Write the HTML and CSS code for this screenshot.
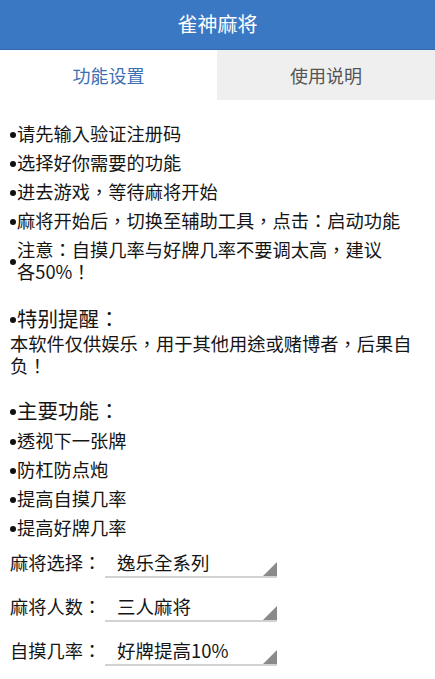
FILE: index.html
```html
<!DOCTYPE html>
<html lang="zh-CN">
<head>
<meta charset="utf-8">
<title>雀神麻将</title>
<link rel="stylesheet" href="styles.css">
</head>
<body>
<header class="appbar">雀神麻将</header>
<nav class="tabs">
  <div class="tab tab-active">功能设置</div>
  <div class="tab tab-idle">使用说明</div>
</nav>
<main class="content">
  <ul class="list list-top">
    <li class="item"><span class="dot"></span><span class="txt">请先输入验证注册码</span></li>
    <li class="item"><span class="dot"></span><span class="txt">选择好你需要的功能</span></li>
    <li class="item"><span class="dot"></span><span class="txt">进去游戏，等待麻将开始</span></li>
    <li class="item"><span class="dot"></span><span class="txt">麻将开始后，切换至辅助工具，点击：启动功能</span></li>
    <li class="item"><span class="dot"></span><span class="txt">注意：自摸几率与好牌几率不要调太高，建议<span class="keep">各50%！</span></span></li>
  </ul>
  <div class="heading heading-warn"><span class="dot"></span><span>特别提醒：</span></div>
  <p class="para">本软件仅供娱乐，用于其他用途或赌博者，后果自负！</p>
  <div class="heading heading-main"><span class="dot"></span><span>主要功能：</span></div>
  <ul class="list list-main">
    <li class="item"><span class="dot"></span><span class="txt">透视下一张牌</span></li>
    <li class="item"><span class="dot"></span><span class="txt">防杠防点炮</span></li>
    <li class="item"><span class="dot"></span><span class="txt">提高自摸几率</span></li>
    <li class="item"><span class="dot"></span><span class="txt">提高好牌几率</span></li>
  </ul>
  <div class="form">
    <div class="row"><span class="label">麻将选择：</span><div class="spinner">逸乐全系列</div></div>
    <div class="row"><span class="label">麻将人数：</span><div class="spinner">三人麻将</div></div>
    <div class="row"><span class="label">自摸几率：</span><div class="spinner">好牌提高10%</div></div>
  </div>
</main>
</body>
</html>
```
FILE: styles.css
```css
* { box-sizing: border-box; }
html, body { margin: 0; padding: 0; background: #ffffff; }
body {
  font-family: "Noto Sans CJK TC", "Noto Sans CJK SC", "Noto Sans", sans-serif;
  font-feature-settings: "locl" 0;
  color: #151515;
  width: 435px;
  height: 679px;
  overflow: hidden;
}
.appbar {
  height: 50px;
  background: #3a78c4;
  color: #ffffff;
  font-size: 20px;
  line-height: 48px;
  text-align: center;
  border-bottom: 1px solid #3569ad;
}
.tabs {
  display: flex;
  height: 50px;
}
.tab {
  font-size: 18px;
  line-height: 50px;
  text-align: center;
}
.tab-active {
  width: 217px;
  background: #ffffff;
  color: #3c6fb3;
}
.tab-idle {
  flex: 1;
  background: #efefef;
  color: #555555;
}
.content {
  padding: 22px 10px 0 10px;
}
.list {
  list-style: none;
  margin: 0;
  padding: 0;
  display: flex;
  flex-direction: column;
  gap: 7px;
}
.item {
  display: flex;
  align-items: center;
  font-size: 18.25px;
  line-height: 22px;
}
.dot {
  flex: none;
  width: 6px;
  height: 6px;
  border-radius: 50%;
  background: #111111;
  margin-right: 1px;
  margin-top: 3px;
}
.txt { flex: 1; }
.keep { white-space: nowrap; }
.heading {
  display: flex;
  align-items: center;
  font-size: 20.5px;
  line-height: 24px;
}
.heading-warn { margin-top: 24px; }
.heading-main { margin-top: 22px; }
.para {
  margin: 2px 0 0 0;
  font-size: 18.25px;
  line-height: 22px;
}
.list-main { margin-top: 7px; }
.form {
  margin-top: 2px;
  display: flex;
  flex-direction: column;
}
.row {
  display: flex;
  align-items: center;
  height: 44px;
}
.label {
  width: 95px;
  font-size: 18.25px;
  line-height: 22px;
}
.spinner {
  position: relative;
  width: 172px;
  height: 30px;
  padding-left: 12px;
  margin-top: 2px;
  font-size: 18.5px;
  line-height: 28px;
  border-bottom: 2px solid #d2d2d2;
}
.spinner::after {
  content: "";
  position: absolute;
  right: 0;
  bottom: 0;
  width: 0;
  height: 0;
  border-left: 14px solid transparent;
  border-bottom: 14px solid #8a8a8a;
}
```
